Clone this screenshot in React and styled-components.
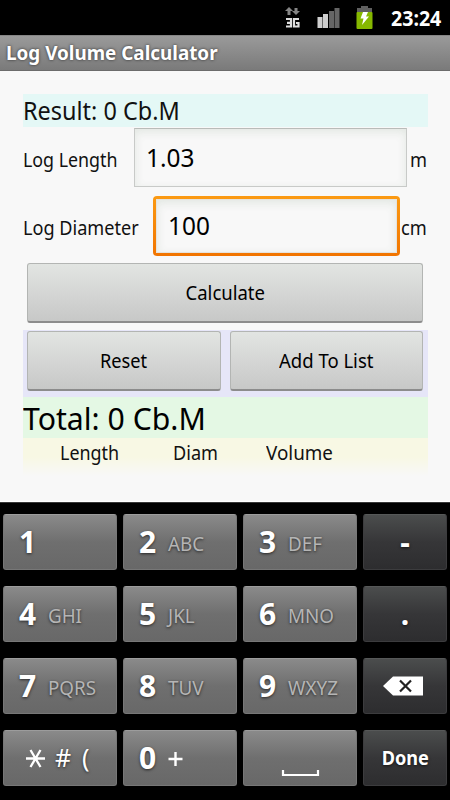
import styled, { createGlobalStyle } from "styled-components";

const screenBackground = "#f8f8f8";
const resultCyan = "#e4f8f6";
const totalGreen = "#e4f8e4";
const listYellow = "#f8f8e4";
const actionLilac = "#e6e6f8";

const GlobalStyle = createGlobalStyle`
  * {
    box-sizing: border-box;
  }

  body {
    margin: 0;
    background: #000;
    font-family: "Noto Sans", "Open Sans", sans-serif;
  }
`;

const Phone = styled.div`
  display: flex;
  flex-direction: column;
  width: 450px;
  height: 800px;
  overflow: hidden;
  background: #000;
`;

// Text drawn slightly narrower than the font's normal width
const Text = styled.span`
  display: inline-block;
  font-size: ${(p) => p.$size}px;
  font-weight: ${(p) => (p.$bold ? 700 : 400)};
  line-height: 1;
  white-space: nowrap;
  transform: scaleX(${(p) => p.$stretch || 0.925});
  transform-origin: ${(p) => p.$origin || "left"} center;
`;

const StatusBar = styled.div`
  display: flex;
  justify-content: flex-end;
  align-items: flex-start;
  height: 35px;
  padding: 6px 9px 0 0;
  color: #fff;
`;

const StatusIcon = styled.svg`
  display: block;
  margin-top: ${(p) => p.$top || 0}px;
  margin-right: ${(p) => p.$gap}px;
`;

const Clock = styled.div`
  width: 50px;
  padding-top: 2px;
`;

const TitleBar = styled.div`
  height: 36px;
  padding: 7px 6px 0;
  background: linear-gradient(#9a9a9a, #8a8a8a 50%, #7a7a7a);
  border-top: 1px solid #858585;
  border-bottom: 1px solid #6c6c6c;
  color: #fff;
  text-shadow: 0 0 3px rgba(0, 0, 0, 0.7);
`;

const Content = styled.div`
  height: 431px;
  padding: 23px 22px 0 23px;
  background: ${screenBackground};
  border-bottom: 1px solid #fff;
  color: #111;
`;

const Result = styled.div`
  height: 33px;
  padding-top: 5px;
  background: ${resultCyan};
`;

const FormRow = styled.div`
  display: flex;
  align-items: baseline;
  height: ${(p) => p.$height}px;
  padding-top: 1px;
`;

const Label = styled.div`
  flex: none;
  width: ${(p) => p.$width}px;
`;

const Unit = styled.div`
  flex: none;
  width: 20px;
  margin-left: ${(p) => p.$gap}px;
`;

const Field = styled.div`
  flex: none;
  width: ${(p) => p.$width}px;
  height: 59px;
  padding: 16px 0 0 11px;
  border: 1px solid #c8cac8;
  border-top-color: #b9bcb9;
  background: ${screenBackground};
  box-shadow: inset 0 3px 9px rgba(205, 215, 205, 0.5);
  color: #000;
`;

const FocusRing = styled.div`
  flex: none;
  width: 247px;
  height: 60px;
  padding: 3px;
  border-radius: 4px;
  background: linear-gradient(#fb9a12, #f17400);
`;

const FocusedField = styled(Field)`
  width: 100%;
  height: 54px;
  padding: 13px 0 0 11px;
  border-color: #e6e3dc;
`;

const Button = styled.button`
  display: flex;
  flex: 1;
  align-items: center;
  justify-content: center;
  height: 60px;
  padding: 0;
  border: 1px solid #b3b5b3;
  border-bottom: 2px solid #8c8c8c;
  border-radius: 3px;
  background: linear-gradient(#e2e5e2, #d5d6d5 50%, #c7c8c7);
  color: #000;
  font-family: inherit;
`;

const CalculateRow = styled.div`
  display: flex;
  height: 67px;
  padding: 0 5px 0 4px;
`;

const ActionRow = styled.div`
  display: flex;
  gap: 9px;
  height: 67px;
  padding: 1px 5px 0 4px;
  background: ${actionLilac};
`;

const Total = styled.div`
  height: 41px;
  padding-top: 6px;
  background: ${totalGreen};
  color: #000;
`;

const ListHeader = styled.div`
  display: grid;
  grid-template-columns: 113px 93px auto;
  height: 38px;
  padding: 5px 0 0 37px;
  background: linear-gradient(${listYellow} 50%, ${screenBackground});
`;

const Keypad = styled.div`
  display: grid;
  grid-template-columns: 114px 114px 114px 84px;
  grid-auto-rows: 56px;
  gap: 16px 6px;
  height: 298px;
  padding: 11px 3px 0;
  border-top: 1px solid #383838;
  background: #000;
`;

const Key = styled.div`
  display: flex;
  align-items: baseline;
  justify-content: ${(p) => (p.$dark ? "center" : "flex-start")};
  padding: ${(p) => p.$top || 12}px 0 0 ${(p) => (p.$dark ? 0 : 15)}px;
  border: 1px solid ${(p) => (p.$dark ? "#3c3c3e" : "#777")};
  border-top-color: ${(p) => (p.$dark ? "#565858" : "#9c9c9c")};
  border-radius: 3px;
  background: ${(p) =>
    p.$dark
      ? "linear-gradient(#4b4d4d, #363638 50%, #2d2d2f)"
      : "linear-gradient(#8a8a8a, #6f6f6f 50%, #686868)"};
  color: #fff;
  text-shadow: 0 1px 3px rgba(0, 0, 0, 0.65);
`;

const Digit = styled.div`
  width: 29px;
`;

const Letters = styled.div`
  align-self: flex-start;
  padding-top: 7px;
  color: #b5b5b5;
`;

const KeyIcon = styled.svg`
  display: block;
  align-self: flex-start;
  margin-top: ${(p) => p.$top || 0}px;
  margin-left: ${(p) => p.$left || 0}px;
  overflow: visible;
`;

const Symbols = styled.div`
  display: flex;
  align-items: baseline;
  padding-left: 7px;
`;

const Hash = styled.div`
  width: 27px;
  margin-left: 10px;
`;

const NumberKey = ({ digit, letters }) => (
  <Key>
    <Digit>
      <Text $size={30} $bold $stretch={1}>{digit}</Text>
    </Digit>
    <Letters>
      <Text $size={20} $stretch={0.94}>{letters}</Text>
    </Letters>
  </Key>
);

const NetworkIcon = () => (
  <StatusIcon $gap={17} $top={1} width="15" height="22" viewBox="0 0 15 22">
    <path d="M4 0L8 4H5.5V8H2.5V4H0zM11 8L7 4H9.5V1H12.5V4H15z" fill="#858585" />
    <path
      d="M1 12H6V19.5H1M2 15.8H6M14 12H9V19.5H13.5V16H11"
      fill="none"
      stroke="#dedede"
      strokeWidth="2.2"
    />
  </StatusIcon>
);

const SignalIcon = () => (
  <StatusIcon $gap={16} width="23" height="22" viewBox="0 0 23 22">
    <rect x="0.5" y="11" width="5" height="11" fill="#cfcfcf" />
    <rect x="6" y="8" width="5" height="14" fill="#cfcfcf" />
    <rect x="12" y="5" width="5" height="17" fill="#666" />
    <rect x="17.5" y="2" width="5" height="20" fill="#666" />
  </StatusIcon>
);

const BatteryIcon = () => (
  <StatusIcon $gap={18} width="17" height="23" viewBox="0 0 17 23">
    <path d="M5 0H12V2H16V7H1V2H5z" fill="#606060" />
    <rect x="0.5" y="6" width="16" height="17" rx="1" fill="#86b800" />
    <path d="M7 6H12L10 10.5H13L6 19L7.5 12.5H4.5z" fill="#fff" />
  </StatusIcon>
);

function App() {
  return (
    <Phone>
      <GlobalStyle />
      <StatusBar>
        <NetworkIcon />
        <SignalIcon />
        <BatteryIcon />
        <Clock>
          <Text $size={20.5} $bold $stretch={0.955}>23:24</Text>
        </Clock>
      </StatusBar>

      <TitleBar>
        <Text $size={20} $bold $stretch={0.943}>Log Volume Calculator</Text>
      </TitleBar>

      <Content>
        <Result>
          <Text $size={24.5} $stretch={0.957}>Result: 0 Cb.M</Text>
        </Result>

        <FormRow $height={68}>
          <Label $width={111}>
            <Text $size={19.7} $stretch={0.905}>Log Length</Text>
          </Label>
          <Field $width={273}>
            <Text $size={25.3} $stretch={0.965}>1.03</Text>
          </Field>
          <Unit $gap={3}>
            <Text $size={19.7}>m</Text>
          </Unit>
        </FormRow>

        <FormRow $height={68}>
          <Label $width={130}>
            <Text $size={19.7} $stretch={0.92}>Log Diameter</Text>
          </Label>
          <FocusRing>
            <FocusedField>
              <Text $size={25.3} $stretch={0.965}>100</Text>
            </FocusedField>
          </FocusRing>
          <Unit $gap={1}>
            <Text $size={19.7}>cm</Text>
          </Unit>
        </FormRow>

        <CalculateRow>
          <Button>
            <Text $size={19.7} $stretch={0.94} $origin="center">Calculate</Text>
          </Button>
        </CalculateRow>
        <ActionRow>
          <Button>
            <Text $size={19.7} $origin="center">Reset</Text>
          </Button>
          <Button>
            <Text $size={19.7} $stretch={0.94} $origin="center">Add To List</Text>
          </Button>
        </ActionRow>

        <Total>
          <Text $size={30.5} $stretch={0.99}>Total: 0 Cb.M</Text>
        </Total>
        <ListHeader>
          <Text $size={19.7} $stretch={0.91}>Length</Text>
          <Text $size={19.7} $stretch={0.92}>Diam</Text>
          <Text $size={19.7} $stretch={0.955}>Volume</Text>
        </ListHeader>
      </Content>

      <Keypad>
        <NumberKey digit="1" />
        <NumberKey digit="2" letters="ABC" />
        <NumberKey digit="3" letters="DEF" />
        <Key $dark>
          <Text $size={30} $bold $stretch={1}>-</Text>
        </Key>

        <NumberKey digit="4" letters="GHI" />
        <NumberKey digit="5" letters="JKL" />
        <NumberKey digit="6" letters="MNO" />
        <Key $dark>
          <Text $size={30} $bold $stretch={1}>.</Text>
        </Key>

        <NumberKey digit="7" letters="PQRS" />
        <NumberKey digit="8" letters="TUV" />
        <NumberKey digit="9" letters="WXYZ" />
        <Key $dark>
          <KeyIcon $top={5} $left={-4} width="40" height="20" viewBox="0 0 40 20">
            <path d="M0 10L10 0.5H40V19.5H10z" fill="#fff" />
            <path d="M17 4.5L28 15.5M28 4.5L17 15.5" stroke="#222" strokeWidth="2.2" />
          </KeyIcon>
        </Key>

        <Key $top={14}>
          <Symbols>
            <KeyIcon $top={4} width="19" height="20" viewBox="0 0 19 20">
              <path
                d="M0 9.5H19M4.5 1L14.5 18M14.5 1L4.5 18"
                stroke="#fff"
                strokeWidth="2.3"
              />
            </KeyIcon>
            <Hash>
              <Text $size={25} $stretch={1}>#</Text>
            </Hash>
            <Text $size={25} $stretch={1}>(</Text>
          </Symbols>
        </Key>
        <Key>
          <Digit>
            <Text $size={30} $bold $stretch={1}>0</Text>
          </Digit>
          <KeyIcon $top={9} width="15" height="15" viewBox="0 0 15 15">
            <path d="M0.5 7H14.5M7.5 0V14" stroke="#fff" strokeWidth="2.4" />
          </KeyIcon>
        </Key>
        <Key>
          <KeyIcon $top={27} $left={23} width="37" height="6" viewBox="0 0 37 6">
            <path d="M1 0V5H36V0" fill="none" stroke="#fff" strokeWidth="2.2" />
          </KeyIcon>
        </Key>
        <Key $dark $top={18}>
          <Text $size={18.7} $bold $stretch={0.97} $origin="center">Done</Text>
        </Key>
      </Keypad>
    </Phone>
  );
}

export default App;
